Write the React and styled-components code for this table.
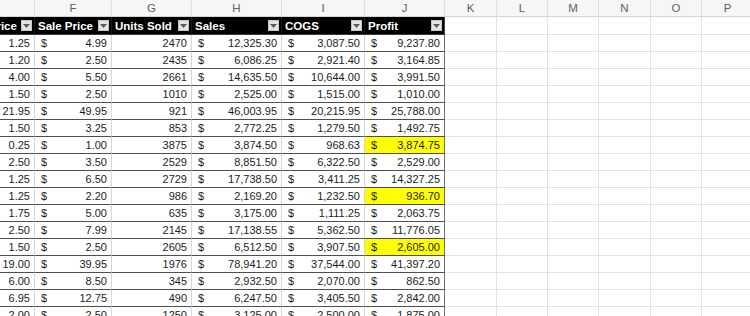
import React from 'react';
import styled, { createGlobalStyle } from 'styled-components';

const GlobalStyle = createGlobalStyle`
  body {
    margin: 0;
    background: #ffffff;
    font-family: "Liberation Sans", Arial, sans-serif;
  }
`;

const COLUMNS = '78px 77px 80px 90px 83px 80px 52px 51px 51px 52px 51px 52px';

const Sheet = styled.div`
  width: 750px;
  height: 316px;
  overflow: hidden;
  background: #ffffff;
`;

const Grid = styled.div`
  margin-left: -43px;
  display: flex;
  flex-direction: column;
`;

const Row = styled.div`
  display: grid;
  grid-template-columns: ${COLUMNS};
  height: ${(p) => p.$height}px;
`;

const LetterCell = styled.div`
  display: flex;
  align-items: center;
  justify-content: center;
  background: #f6f6f6;
  color: #616161;
  font-size: 11.5px;
  border-right: 1px solid #e0e0e0;
  border-bottom: 1px solid #d4d4d4;
  box-sizing: border-box;
`;

const HeadCell = styled.div`
  display: flex;
  align-items: center;
  justify-content: space-between;
  padding: 0 2px 0 3px;
  background: #000000;
  color: #ffffff;
  font-size: 11.5px;
  font-weight: bold;
  white-space: nowrap;
  box-sizing: border-box;
  border-right: 1px solid ${(p) => (p.$last ? '#444' : '#1a1a1a')};
  border-bottom: 1px solid #3a3a3a;
`;

const FilterButton = styled.span`
  display: flex;
  align-items: center;
  justify-content: center;
  width: 11px;
  height: 11px;
  flex-shrink: 0;
  background: #e4e4e4;
  border: 1px solid #c4c4c4;
  box-sizing: border-box;
`;

const DataCell = styled.div`
  display: flex;
  align-items: center;
  justify-content: ${(p) => (p.$money ? 'space-between' : 'flex-end')};
  padding: 0 4px 0 6px;
  font-size: 11px;
  color: #1c1c1c;
  white-space: nowrap;
  box-sizing: border-box;
  background: ${(p) => (p.$highlight ? '#ffff00' : '#ffffff')};
  border-right: 1px solid ${(p) => (p.$last ? '#6b6b6b' : '#d6d6d6')};
  border-bottom: 1px solid #4f4f4f;
`;

const EmptyCell = styled.div`
  background: #ffffff;
  border-right: 1px solid #e2e2e2;
  border-bottom: 1px solid #e2e2e2;
  box-sizing: border-box;
`;

const letters = ['', 'F', 'G', 'H', 'I', 'J', 'K', 'L', 'M', 'N', 'O', 'P'];
const headers = ['Cost Price', 'Sale Price', 'Units Sold', 'Sales', 'COGS', 'Profit'];

// cost, sale price, units, sales, cogs, profit, highlighted profit
const rows = [
  ['1.25', '4.99', '2470', '12,325.30', '3,087.50', '9,237.80'],
  ['1.20', '2.50', '2435', '6,086.25', '2,921.40', '3,164.85'],
  ['4.00', '5.50', '2661', '14,635.50', '10,644.00', '3,991.50'],
  ['1.50', '2.50', '1010', '2,525.00', '1,515.00', '1,010.00'],
  ['21.95', '49.95', '921', '46,003.95', '20,215.95', '25,788.00'],
  ['1.50', '3.25', '853', '2,772.25', '1,279.50', '1,492.75'],
  ['0.25', '1.00', '3875', '3,874.50', '968.63', '3,874.75', true],
  ['2.50', '3.50', '2529', '8,851.50', '6,322.50', '2,529.00'],
  ['1.25', '6.50', '2729', '17,738.50', '3,411.25', '14,327.25'],
  ['1.25', '2.20', '986', '2,169.20', '1,232.50', '936.70', true],
  ['1.75', '5.00', '635', '3,175.00', '1,111.25', '2,063.75'],
  ['2.50', '7.99', '2145', '17,138.55', '5,362.50', '11,776.05'],
  ['1.50', '2.50', '2605', '6,512.50', '3,907.50', '2,605.00', true],
  ['19.00', '39.95', '1976', '78,941.20', '37,544.00', '41,397.20'],
  ['6.00', '8.50', '345', '2,932.50', '2,070.00', '862.50'],
  ['6.95', '12.75', '490', '6,247.50', '3,405.50', '2,842.00'],
  ['2.00', '2.50', '1250', '3,125.00', '2,500.00', '1,875.00'],
];

const Arrow = () => (
  <svg width="7" height="4" viewBox="0 0 7 4">
    <polygon points="0,0 7,0 3.5,4" fill="#5a5a5a" />
  </svg>
);

const Money = ({ value, highlight, last }) => (
  <DataCell $money $highlight={highlight} $last={last}>
    <span>$</span>
    <span>{value}</span>
  </DataCell>
);

const Blanks = () =>
  Array.from({ length: 6 }, (_, i) => <EmptyCell key={`b${i}`} />);

export default function App() {
  return (
    <Sheet>
      <GlobalStyle />
      <Grid>
        <Row $height={17}>
          {letters.map((l, i) => (
            <LetterCell key={i}>{l}</LetterCell>
          ))}
        </Row>
        <Row $height={18}>
          {headers.map((h, i) => (
            <HeadCell key={h} $last={i === headers.length - 1}>
              <span>{h}</span>
              <FilterButton>
                <Arrow />
              </FilterButton>
            </HeadCell>
          ))}
          <Blanks />
        </Row>
        {rows.map((r, i) => (
          <Row key={i} $height={17}>
            <DataCell>{r[0]}</DataCell>
            <Money value={r[1]} />
            <DataCell>{r[2]}</DataCell>
            <Money value={r[3]} />
            <Money value={r[4]} />
            <Money value={r[5]} highlight={r[6]} last />
            <Blanks />
          </Row>
        ))}
      </Grid>
    </Sheet>
  );
}
